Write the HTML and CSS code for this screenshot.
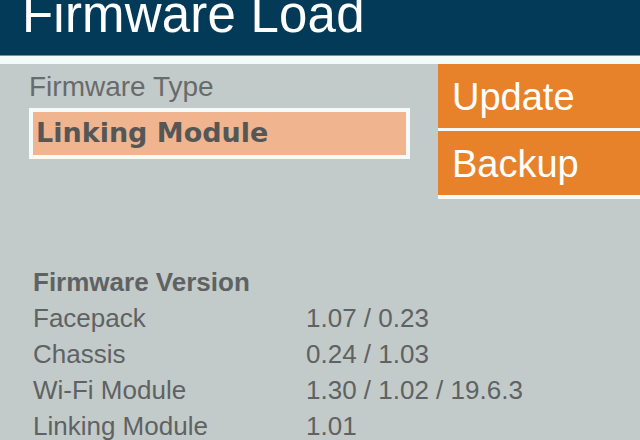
FILE: index.html
```html
<!DOCTYPE html>
<html lang="en">
<head>
  <meta charset="UTF-8">
  <title>Firmware Load</title>
  <link rel="stylesheet" href="styles.css">
</head>
<body>
  <!-- Title bar -->
  <div class="title-bar">
    <h1>Firmware Load</h1>
  </div>
  <div class="title-gap"></div>

  <div class="main">
    <!-- Left panel -->
    <div class="panel">
      <div class="field-label">Firmware Type</div>
      <div class="select-box">Linking Module</div>

      <div class="versions">
        <div class="versions-title">Firmware Version</div>
        <div class="row"><span class="name">Facepack</span><span class="value">1.07 / 0.23</span></div>
        <div class="row"><span class="name">Chassis</span><span class="value">0.24 / 1.03</span></div>
        <div class="row"><span class="name">Wi-Fi Module</span><span class="value">1.30 / 1.02 / 19.6.3</span></div>
        <div class="row"><span class="name">Linking Module</span><span class="value">1.01</span></div>
      </div>
    </div>

    <!-- Right buttons -->
    <div class="actions">
      <button class="action">Update</button>
      <button class="action last">Backup</button>
    </div>
  </div>
</body>
</html>
```

FILE: styles.css
```css
/* Reset */
* {
  margin: 0;
  padding: 0;
  box-sizing: border-box;
}

body {
  width: 640px;
  height: 440px;
  overflow: hidden;
  background-color: #c3cbca;
  font-family: "Liberation Sans", Arial, sans-serif;
}

/* Title bar */
.title-bar {
  height: 56px;
  background-color: #023a57;
  border-bottom: 1px solid #6f93a0;
  overflow: hidden;
}

.title-bar h1 {
  font-size: 51px;
  font-weight: normal;
  line-height: 50px;
  color: #ffffff;
  margin-top: -10px;
  padding-left: 22px;
  letter-spacing: 0.2px;
  white-space: nowrap;
}

.title-gap {
  height: 8px;
  background-color: #f4faf9;
}

/* Main area */
.main {
  display: flex;
}

.panel {
  flex: 1;
  min-width: 0;
}

.field-label {
  font-size: 28px;
  line-height: 30px;
  color: #686b6b;
  margin: 8px 0 0 29px;
}

.select-box {
  width: 381px;
  height: 51px;
  margin: 6px 0 0 29px;
  border: 4px solid #f6fbfa;
  background-color: #f0b48e;
  color: #555757;
  font-family: "DejaVu Sans", sans-serif;
  font-weight: bold;
  font-size: 27px;
  line-height: 42px;
  padding-left: 3px;
}

/* Version table */
.versions {
  margin: 105px 0 0 33px;
  font-size: 26px;
  color: #5f6262;
  white-space: nowrap;
}

.versions-title {
  font-weight: bold;
  line-height: 36px;
}

.row {
  display: flex;
  line-height: 36px;
}

.row .name {
  flex: none;
  width: 273px;
}

/* Buttons */
.actions {
  flex: none;
  width: 202px;
  display: flex;
  flex-direction: column;
}

.action {
  height: 67px;
  border: none;
  border-bottom: 3px solid #f4faf9;
  background-color: #e8822a;
  color: #ffffff;
  font-family: "Liberation Sans", Arial, sans-serif;
  font-size: 38px;
  text-align: left;
  padding: 2px 0 0 14px;
}

.action.last {
  height: 68px;
  border-bottom-width: 4px;
}
```
